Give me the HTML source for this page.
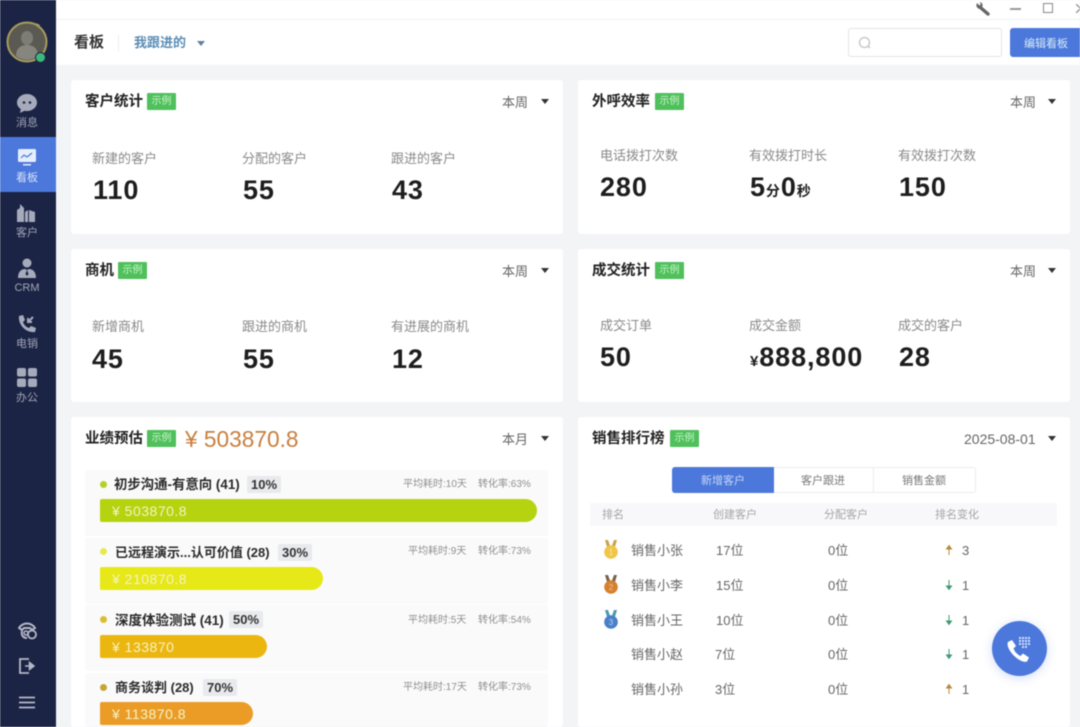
<!DOCTYPE html>
<html lang="zh"><head><meta charset="utf-8"><title>看板</title>
<style>
*{box-sizing:border-box;margin:0;padding:0}
html{background:#f3f4f6;width:1080px;height:727px;overflow:hidden}
body{width:1080px;height:727px;overflow:hidden;background:#f3f4f6;font-family:"Liberation Sans","Noto Sans CJK SC",sans-serif;color:#222;filter:blur(.4px)}
.a,.t{position:absolute}
.t{white-space:nowrap;line-height:1}
.side{left:0;top:0;width:56px;height:727px;background:#1c2445}
.nav{left:-1px;width:56px;text-align:center;font-size:11px;color:#a0a5b6;line-height:1;margin-top:1px}
.card{position:absolute;background:#fff;border-radius:3px}
.h{font-size:14.500px;font-weight:700;color:#222}
.tag{position:absolute;width:29px;height:17px;background:#4fc05c;color:#c9f5c9;font-size:10px;line-height:18px;text-align:center;border-radius:1px}
.per{font-size:13px;color:#666;margin-top:1px}
.tri{position:absolute;width:0;height:0;border-left:4px solid transparent;border-right:4px solid transparent;border-top:5px solid #333;margin-top:1px}
.lb{font-size:13px;color:#8a8a8a}
.num{font-size:27px;font-weight:700;color:#1d1d1d;letter-spacing:.9px;margin-top:1px}
.bg{position:absolute;left:85px;width:463px;height:66px;background:#fafafb;border-radius:3px}
.dot{position:absolute;left:100px;width:7px;height:7px;border-radius:50%}
.st{font-size:13px;font-weight:700;color:#2a2a2a}
.pc{position:absolute;height:17px;background:#e9eaee;border-radius:2px;font-size:13px;font-weight:700;color:#333;line-height:17px;text-align:center}
.mini{font-size:10px;color:#8f8f8f;margin-top:1px}
.bar{position:absolute;left:100px;height:23px;border-radius:2px 12px 12px 2px;color:#f6f3c6;font-size:14px;line-height:24px;padding-left:12px;letter-spacing:.5px}
.tb{font-size:11px;color:#a5a5a5;margin-top:1px}
.tc{font-size:13px;color:#666;margin-top:1px}
svg{position:absolute;display:block}
</style></head><body>

<div class="a side"></div>
<!-- avatar -->
<svg style="left:4px;top:18px" width="48" height="48" viewBox="0 0 48 48">
<circle cx="23" cy="24" r="19.500" fill="#5a5a52" stroke="#a89c5d" stroke-width="2"/>
<ellipse cx="23" cy="20" rx="6" ry="7" fill="#7d7d78"/><path d="M12 38c0-8 5-11 11-11s11 3 11 11c-6 5-16 5-22 0z" fill="#86867f"/>
<path d="M32 5l4 2-2 3z" fill="#a89c5d"/>
<circle cx="36.500" cy="39.500" r="5" fill="#3cb878" stroke="#1c2445" stroke-width="1"/></svg>

<svg style="left:16px;top:93px" width="22" height="21" viewBox="0 0 22 21"><path d="M11 1C5.500 1 1 4.800 1 9.500c0 2.700 1.500 5 3.800 6.600L4 20l4.500-2.300c.8.200 1.700.3 2.500.3 5.500 0 10-3.800 10-8.500S16.500 1 11 1z" fill="#a6abbb"/><circle cx="8" cy="9.500" r="1.300" fill="#1c2445"/><circle cx="14" cy="9.500" r="1.300" fill="#1c2445"/></svg>
<div class="a nav" style="top:117px">消息</div>

<div class="a" style="left:0;top:137px;width:56px;height:55px;background:#4c78dc"></div>
<svg style="left:17px;top:149px" width="20" height="18" viewBox="0 0 20 18"><rect x="1" y="0" width="18" height="13" rx="1.500" fill="#e6eefc"/><path d="M4 9l3-3 3 2 5-4" stroke="#4c78dc" stroke-width="1.200" fill="none"/><rect x="6" y="15" width="8" height="1.500" fill="#e6eefc"/></svg>
<div class="a nav" style="top:172px;color:#d8e2f8">看板</div>

<svg style="left:17px;top:203px" width="20" height="20" viewBox="0 0 20 20"><path d="M0 19V7l3-2V1l4 4v14zM8 19V9l3-2v12zM12 19V7l6 2v10z" fill="#a6abbb"/></svg>
<div class="a nav" style="top:227px">客户</div>

<svg style="left:17px;top:258px" width="20" height="21" viewBox="0 0 20 21"><circle cx="10" cy="5" r="4.500" fill="#a6abbb"/><path d="M1 20c0-6 3-9 7-9l2 1 2-1c4 0 7 3 7 9z" fill="#a6abbb"/><path d="M10 12l1.500 4-1.500 2-1.500-2z" fill="#1c2445"/></svg>
<div class="a nav" style="top:282px">CRM</div>

<svg style="left:17px;top:314px" width="20" height="20" viewBox="0 0 20 20"><path d="M2 2l4-1 2 5-2 2c1 3 3 5 6 6l2-2 5 2-1 4c-9 1-17-7-16-16z" fill="#a6abbb"/><path d="M11 8l5-5M11 4v4h4" stroke="#a6abbb" stroke-width="2" fill="none"/></svg>
<div class="a nav" style="top:338px">电销</div>

<svg style="left:17px;top:368px" width="20" height="19" viewBox="0 0 20 19"><rect width="9" height="8.500" rx="2" fill="#a6abbb"/><rect x="11" width="9" height="8.500" rx="2" fill="#a6abbb"/><rect y="10.500" width="9" height="8.500" rx="2" fill="#a6abbb"/><rect x="11" y="10.500" width="9" height="8.500" rx="2" fill="#a6abbb"/></svg>
<div class="a nav" style="top:392px">办公</div>

<svg style="left:18px;top:622px" width="20" height="18" viewBox="0 0 20 18"><path d="M1 6c4-6 12-6 16 0l-3 2-2-2H6L4 8zM4 9c-1 4 1 7 5 7" stroke="#b4b8c5" stroke-width="2" fill="none"/><circle cx="14" cy="12.500" r="4" fill="none" stroke="#b4b8c5" stroke-width="1.800"/><circle cx="8" cy="11" r="2" fill="none" stroke="#b4b8c5" stroke-width="1.500"/></svg>
<svg style="left:18px;top:657px" width="18" height="18" viewBox="0 0 18 18"><path d="M11 2H2v14h9" stroke="#b4b8c5" stroke-width="1.800" fill="none"/><path d="M7 9h7M11.500 5.500L16 9l-4.500 3.500z" stroke="#b4b8c5" stroke-width="1.500" fill="#b4b8c5"/></svg>
<svg style="left:19px;top:696px" width="16" height="13" viewBox="0 0 16 13"><path d="M0 1.500h16M0 6.500h16M0 11.500h16" stroke="#b4b8c5" stroke-width="1.800"/></svg>

<!-- top -->
<div class="a" style="left:56px;top:0;width:1024px;height:65px;background:#fff"></div>
<div class="a" style="left:56px;top:19px;width:1024px;height:1px;background:#f1f1f2"></div>
<svg style="left:975px;top:2px" width="15" height="14" viewBox="0 0 15 14"><path d="M6 6l7 6" stroke="#666" stroke-width="3.400" stroke-linecap="round"/><path d="M2 1l2.500 2.500L6 2 4.500.5C6.500 0 8 1.500 7.500 4L6 7C3.500 7.500.8 5 1.500 2.500z" fill="#666"/></svg>
<div class="a" style="left:1010px;top:8px;width:11px;height:1.500px;background:#999"></div>
<div class="a" style="left:1043px;top:3px;width:10px;height:10px;border:1.500px solid #888"></div>
<svg style="left:1076px;top:4px" width="4" height="9" viewBox="0 0 4 9"><path d="M0 0l4 4M4 5L0 9" stroke="#888" stroke-width="1.200"/></svg>
<div class="t" style="left:74px;top:35px;font-size:15px;font-weight:700;color:#333">看板</div>
<div class="a" style="left:118px;top:35px;width:1px;height:17px;background:#eceef0"></div>
<div class="t" style="left:134px;top:36px;font-size:13px;font-weight:700;color:#5b8db5">我跟进的</div>
<div class="tri" style="left:197px;top:40px;border-top-color:#60809e"></div>
<div class="a" style="left:848px;top:28px;width:154px;height:29px;border:1px solid #e4e4e6;border-radius:3px;background:#fff"></div>
<svg style="left:858px;top:36px" width="14" height="14" viewBox="0 0 14 14"><circle cx="6.500" cy="6.500" r="5" fill="none" stroke="#c4c4c4" stroke-width="1.300"/><path d="M10 10l2 2" stroke="#c4c4c4" stroke-width="1.300"/></svg>
<div class="a" style="left:1010px;top:28px;width:70px;height:29px;background:#4c78dc;border-radius:3px 0 0 3px"></div>
<div class="t" style="left:1024px;top:39px;font-size:11px;color:#d6ecf6">编辑看板</div>

<!-- cards -->
<div class="card" style="left:71px;top:80px;width:492px;height:154px"></div>
<div class="card" style="left:578px;top:80px;width:492px;height:154px"></div>
<div class="card" style="left:71px;top:249px;width:492px;height:153px"></div>
<div class="card" style="left:578px;top:249px;width:492px;height:153px"></div>
<div class="card" style="left:71px;top:417px;width:492px;height:310px"></div>
<div class="card" style="left:578px;top:417px;width:492px;height:310px"></div>

<!-- 客户统计 -->
<div class="t h" style="left:85px;top:95px">客户统计</div><div class="tag" style="left:147px;top:93px">示例</div>
<div class="t per" style="left:502px;top:95px">本周</div><div class="tri" style="left:541px;top:98px"></div>
<div class="t lb" style="left:92px;top:152px">新建的客户</div><div class="t num" style="left:93px;top:176px">110</div>
<div class="t lb" style="left:242px;top:152px">分配的客户</div><div class="t num" style="left:243px;top:176px">55</div>
<div class="t lb" style="left:391px;top:152px">跟进的客户</div><div class="t num" style="left:392px;top:176px">43</div>

<!-- 外呼效率 -->
<div class="t h" style="left:592px;top:95px">外呼效率</div><div class="tag" style="left:655px;top:93px">示例</div>
<div class="t per" style="left:1010px;top:95px">本周</div><div class="tri" style="left:1048px;top:98px"></div>
<div class="t lb" style="left:600px;top:149px">电话拨打次数</div><div class="t num" style="left:600px;top:173px">280</div>
<div class="t lb" style="left:749px;top:149px">有效拨打时长</div>
<div class="t num" style="left:750px;top:173px">5<span style="font-size:14px">分</span>0<span style="font-size:14px">秒</span></div>
<div class="t lb" style="left:898px;top:149px">有效拨打次数</div><div class="t num" style="left:899px;top:173px">150</div>

<!-- 商机 -->
<div class="t h" style="left:85px;top:264px">商机</div><div class="tag" style="left:118px;top:262px">示例</div>
<div class="t per" style="left:502px;top:264px">本周</div><div class="tri" style="left:541px;top:267px"></div>
<div class="t lb" style="left:92px;top:320px">新增商机</div><div class="t num" style="left:92px;top:345px">45</div>
<div class="t lb" style="left:242px;top:320px">跟进的商机</div><div class="t num" style="left:243px;top:345px">55</div>
<div class="t lb" style="left:391px;top:320px">有进展的商机</div><div class="t num" style="left:392px;top:345px">12</div>

<!-- 成交统计 -->
<div class="t h" style="left:592px;top:264px">成交统计</div><div class="tag" style="left:655px;top:262px">示例</div>
<div class="t per" style="left:1010px;top:264px">本周</div><div class="tri" style="left:1048px;top:267px"></div>
<div class="t lb" style="left:600px;top:319px">成交订单</div><div class="t num" style="left:600px;top:343px">50</div>
<div class="t lb" style="left:749px;top:319px">成交金额</div>
<div class="t num" style="left:750px;top:343px"><span style="font-size:15px">¥</span>888,800</div>
<div class="t lb" style="left:898px;top:319px">成交的客户</div><div class="t num" style="left:899px;top:343px">28</div>

<!-- 业绩预估 -->
<div class="t h" style="left:85px;top:432px">业绩预估</div><div class="tag" style="left:147px;top:430px">示例</div>
<div class="t" style="left:185px;top:428px;font-size:22.700px;color:#c87f3f">¥ 503870.8</div>
<div class="t per" style="left:502px;top:432px">本月</div><div class="tri" style="left:541px;top:435px"></div>

<div class="bg" style="top:470px"></div><div class="bg" style="top:538px"></div><div class="bg" style="top:605px"></div><div class="bg" style="top:673px;height:54px"></div>

<div class="dot" style="top:481px;background:#b5d029"></div>
<div class="t st" style="left:114px;top:478px;font-size:13.400px">初步沟通-有意向 (41)</div><div class="pc" style="left:247px;top:476px;width:34px">10%</div>
<div class="t mini" style="left:403px;top:479px">平均耗时:10天</div><div class="t mini" style="left:478px;top:479px">转化率:63%</div>
<div class="bar" style="top:499px;width:437px;background:#b5d30e">¥ 503870.8</div>

<div class="dot" style="top:548px;background:#e5ea4f"></div>
<div class="t st" style="left:115px;top:546px">已远程演示...认可价值 (28)</div><div class="pc" style="left:278px;top:544px;width:34px">30%</div>
<div class="t mini" style="left:408px;top:546px">平均耗时:9天</div><div class="t mini" style="left:478px;top:546px">转化率:73%</div>
<div class="bar" style="top:567px;width:223px;background:#e6e818">¥ 210870.8</div>

<div class="dot" style="top:616px;background:#d9bf2e"></div>
<div class="t st" style="left:115px;top:614px;font-size:13.500px">深度体验测试 (41)</div><div class="pc" style="left:229px;top:611px;width:34px">50%</div>
<div class="t mini" style="left:408px;top:615px">平均耗时:5天</div><div class="t mini" style="left:478px;top:615px">转化率:54%</div>
<div class="bar" style="top:635px;width:167px;background:#ebb60f">¥ 133870</div>

<div class="dot" style="top:684px;background:#c6a533"></div>
<div class="t st" style="left:115px;top:681px">商务谈判 (28)</div><div class="pc" style="left:203px;top:679px;width:34px">70%</div>
<div class="t mini" style="left:403px;top:682px">平均耗时:17天</div><div class="t mini" style="left:478px;top:682px">转化率:73%</div>
<div class="bar" style="top:702px;width:153px;background:#ea9c26">¥ 113870.8</div>

<!-- 销售排行榜 -->
<div class="t h" style="left:592px;top:432px">销售排行榜</div><div class="tag" style="left:670px;top:430px">示例</div>
<div class="t per" style="left:964px;top:431px;font-size:14px">2025-08-01</div><div class="tri" style="left:1048px;top:435px"></div>

<div class="a" style="left:672px;top:467px;width:304px;height:26px;border:1px solid #ececee;border-radius:3px;background:#fff"></div>
<div class="a" style="left:672px;top:467px;width:102px;height:26px;background:#4c78dc;border-radius:3px 0 0 3px"></div>
<div class="a" style="left:873px;top:467px;width:1px;height:26px;background:#ececee"></div>
<div class="t" style="left:701px;top:476px;font-size:11px;color:#c5d6f5">新增客户</div>
<div class="t" style="left:801px;top:476px;font-size:11px;color:#777">客户跟进</div>
<div class="t" style="left:902px;top:476px;font-size:11px;color:#777">销售金额</div>

<div class="a" style="left:590px;top:503px;width:467px;height:23px;background:#f8f8fa"></div>
<div class="t tb" style="left:602px;top:509px">排名</div><div class="t tb" style="left:713px;top:509px">创建客户</div><div class="t tb" style="left:824px;top:509px">分配客户</div><div class="t tb" style="left:935px;top:509px">排名变化</div>

<svg style="left:603px;top:540px" width="16" height="19" viewBox="0 0 16 19"><path d="M2 0h3l2.500 7-3 1.500zM14 0h-3L8.500 7l3 1.500z" fill="#c9a24a"/><circle cx="8" cy="12" r="6.800" fill="#f0c648"/><text x="8" y="15" font-size="8" text-anchor="middle" fill="#f8e6a8" font-family="Liberation Sans">1</text></svg>
<svg style="left:603px;top:575px" width="16" height="19" viewBox="0 0 16 19"><path d="M2 0h3l2.500 7-3 1.500zM14 0h-3L8.500 7l3 1.500z" fill="#76604a"/><circle cx="8" cy="12" r="6.800" fill="#d5812f"/><text x="8" y="15" font-size="8" text-anchor="middle" fill="#f2c596" font-family="Liberation Sans">2</text></svg>
<svg style="left:603px;top:610px" width="16" height="19" viewBox="0 0 16 19"><path d="M2 0h3l2.500 7-3 1.500zM14 0h-3L8.500 7l3 1.500z" fill="#4a9ab0"/><circle cx="8" cy="12" r="6.800" fill="#4a80c8"/><text x="8" y="15" font-size="8" text-anchor="middle" fill="#bcd3f0" font-family="Liberation Sans">3</text></svg>

<div class="t tc" style="left:631px;top:543px">销售小张</div><div class="t tc" style="left:716px;top:543px">17位</div><div class="t tc" style="left:828px;top:543px">0位</div><div class="t tc" style="left:962px;top:543px">3</div>
<div class="t tc" style="left:631px;top:578px">销售小李</div><div class="t tc" style="left:716px;top:578px">15位</div><div class="t tc" style="left:828px;top:578px">0位</div><div class="t tc" style="left:962px;top:578px">1</div>
<div class="t tc" style="left:631px;top:613px">销售小王</div><div class="t tc" style="left:716px;top:613px">10位</div><div class="t tc" style="left:828px;top:613px">0位</div><div class="t tc" style="left:962px;top:613px">1</div>
<div class="t tc" style="left:631px;top:647px">销售小赵</div><div class="t tc" style="left:715px;top:647px">7位</div><div class="t tc" style="left:828px;top:647px">0位</div><div class="t tc" style="left:962px;top:647px">1</div>
<div class="t tc" style="left:631px;top:682px">销售小孙</div><div class="t tc" style="left:715px;top:682px">3位</div><div class="t tc" style="left:828px;top:682px">0位</div><div class="t tc" style="left:962px;top:682px">1</div>

<svg style="left:945px;top:545px" width="8" height="10" viewBox="0 0 8 10"><path d="M4 10V3M1.500 4L4 .5 6.500 4z" stroke="#b58a3a" fill="#b58a3a"/></svg>
<svg style="left:945px;top:580px" width="8" height="10" viewBox="0 0 8 10"><path d="M4 0v7M1.500 6L4 9.500 6.500 6z" stroke="#3f9a72" fill="#3f9a72"/></svg>
<svg style="left:945px;top:615px" width="8" height="10" viewBox="0 0 8 10"><path d="M4 0v7M1.500 6L4 9.500 6.500 6z" stroke="#3f9a72" fill="#3f9a72"/></svg>
<svg style="left:945px;top:649px" width="8" height="10" viewBox="0 0 8 10"><path d="M4 0v7M1.500 6L4 9.500 6.500 6z" stroke="#3f9a72" fill="#3f9a72"/></svg>
<svg style="left:945px;top:684px" width="8" height="10" viewBox="0 0 8 10"><path d="M4 10V3M1.500 4L4 .5 6.500 4z" stroke="#b58a3a" fill="#b58a3a"/></svg>

<!-- float -->
<div class="a" style="left:992px;top:621px;width:55px;height:55px;border-radius:50%;background:#4c78dc;box-shadow:0 2px 10px rgba(76,120,220,.25)"></div>
<svg style="left:1004px;top:632px" width="32" height="34" viewBox="0 0 32 34">
<path d="M4 10l4-2 4 6-2.500 2.500c1 3 3.500 6 7 7.500l2.500-2.500 6 4-2 4c-2 1-6 0-11-4S2 14 4 10z" fill="#fff"/>
<g fill="#cfe0fb"><rect x="15" y="5" width="2" height="2"/><rect x="18" y="5" width="2" height="2"/><rect x="21" y="5" width="2" height="2"/><rect x="24" y="5" width="2" height="2"/><rect x="15" y="8" width="2" height="2"/><rect x="18" y="8" width="2" height="2"/><rect x="21" y="8" width="2" height="2"/><rect x="24" y="8" width="2" height="2"/><rect x="15" y="11" width="2" height="2"/><rect x="18" y="11" width="2" height="2"/><rect x="21" y="11" width="2" height="2"/><rect x="24" y="11" width="2" height="2"/><rect x="18" y="14" width="2" height="2"/><rect x="21" y="14" width="2" height="2"/></g></svg>
</body></html>
